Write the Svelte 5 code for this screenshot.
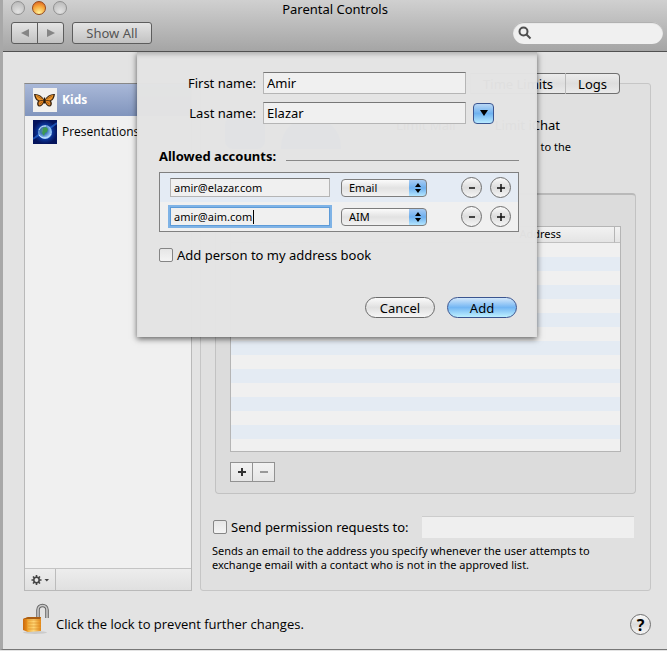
<script>
	let firstName = 'Amir';
	let lastName = 'Elazar';
	let addToBook = false;
	let sendRequests = false;
	let search = '';
	let requestAddress = '';

	let accounts = [
		{ address: 'amir@elazar.com', type: 'Email' },
		{ address: 'amir@aim.com', type: 'AIM' }
	];
	let active = 1;

	const addAccount = () => {
		accounts = [...accounts, { address: '', type: 'Email' }];
	};
	const removeAccount = (i) => {
		accounts = accounts.filter((_, n) => n !== i);
	};
</script>

<div class="window">
	<header>
		<div class="titlebar">
			<div class="lights">
				<button class="light" aria-label="Close"></button>
				<button class="light amber" aria-label="Minimize"></button>
				<button class="light" aria-label="Zoom"></button>
			</div>
			<h1>Parental Controls</h1>
		</div>
		<div class="toolbar">
			<div class="nav">
				<button aria-label="Back"><svg width="10" height="10" viewBox="0 0 10 10"><path d="M9 1v8L1 5z" /></svg></button>
				<button aria-label="Forward"><svg width="10" height="10" viewBox="0 0 10 10"><path d="M1 1v8l8-4z" /></svg></button>
			</div>
			<button class="show-all">Show All</button>
			<label class="search">
				<svg width="14" height="14" viewBox="0 0 14 14"><circle cx="5.5" cy="5.5" r="4" /><path d="M8.5 8.5l4 4" /></svg>
				<input type="text" aria-label="Search" bind:value={search}>
			</label>
		</div>
	</header>

	<main>
		<aside>
			<ul>
				<li class="selected">
					<svg width="24" height="24" viewBox="0 0 24 24">
						<rect width="24" height="24" fill="#f1f0ee" />
						<path d="M11.5 12C9 7.500 5 5.500 1 6c.4 3 1.400 6 4 7-1.500 2-1 5 1 5.500 2.500.2 4.500-2 5.500-5 1 3 3 5.200 5.500 5 2-.5 2.500-3.500 1-5.500 2.600-1 3.600-4 4-7-4-.5-8 1.500-10.500 6z" fill="#3b2613" />
						<path d="M10.500 11.800C8 8.500 5.500 7 2.500 6.900c.5 2.600 1.500 4.700 4 5.500z" fill="#ec9429" />
						<path d="M12.500 11.800c2.500-3.300 5-4.800 8-4.900-.5 2.600-1.500 4.700-4 5.500z" fill="#ec9429" />
						<path d="M10.500 12.600l-4.100.7c-1.400 1.400-1.100 3.900.2 4.300 1.900 0 3.400-2.300 3.900-5z" fill="#e08423" />
						<path d="M12.500 12.600l4.100.7c1.400 1.400 1.100 3.900-.2 4.300-1.900 0-3.400-2.300-3.900-5z" fill="#e08423" />
						<path d="M4 8l5 3M19 8l-5 3M7 16l2-2M16 16l-2-2" stroke="#74400f" stroke-width=".5" />
						<path d="M11.500 9.500v6" stroke="#241708" stroke-width="1.200" />
					</svg>
					<span>Kids</span>
				</li>
				<li>
					<svg width="24" height="24" viewBox="0 0 24 24">
						<defs>
							<radialGradient id="space"><stop offset="0" stop-color="#2860d8" /><stop offset=".55" stop-color="#0c3aa0" /><stop offset="1" stop-color="#05145c" /></radialGradient>
							<radialGradient id="globe" cx=".4" cy=".4"><stop offset="0" stop-color="#5b9a78" /><stop offset=".5" stop-color="#3d72b4" /><stop offset="1" stop-color="#8fc0f4" /></radialGradient>
						</defs>
						<rect width="24" height="24" fill="#05145c" />
						<rect width="24" height="24" fill="url(#space)" />
						<path d="M0 19L7 14M17 8l7-5" stroke="#2c76e6" stroke-width="2" opacity=".6" />
						<circle cx="12" cy="12" r="7" fill="url(#globe)" />
						<path d="M10 8l3-1 2 2-1 3-2 1-1 3-2-3 1-2z" fill="#3c9a50" />
						<path d="M6 15c3 4 9 4 12-1M6 10c1-3 4-4 7-4" stroke="#c7e2ff" fill="none" />
					</svg>
					<span>Presentations</span>
				</li>
			</ul>
			<div class="actions">
				<button aria-label="Actions">
					<svg width="18" height="12" viewBox="0 0 18 12">
						<circle cx="5.500" cy="6" r="2.700" fill="none" stroke="#444" stroke-width="1.600" />
						<path d="M5.500 1v2M5.500 9v2M.5 6h2M8.500 6h2M2 2.500l1.400 1.400M7.600 8.100L9 9.500M9 2.500L7.600 3.900M3.400 8.100L2 9.500" stroke="#444" stroke-width="1.600" />
						<path d="M13.500 5h4.500l-2.200 2.500z" fill="#444" />
					</svg>
				</button>
			</div>
		</aside>

		<section class="panel">
			<nav class="tabs">
				<button>Time Limits</button>
				<button>Logs</button>
			</nav>
			<div class="intro">
				<div class="app-icon"></div>
				<div class="app-icon wide"></div>
				<div class="limits">
					<p class="kinds"><span>Limit Mail</span><span>Limit iChat</span></p>
					<p class="note">to the</p>
				</div>
			</div>

			<div class="group">
				<table>
					<thead>
						<tr><th>Address</th><th class="corner"></th></tr>
					</thead>
					<tbody>
						<tr><td colspan="2"></td></tr>
					</tbody>
				</table>
				<div class="edit">
					<button aria-label="Add contact"><svg width="10" height="10" viewBox="0 0 10 10"><path d="M5 1v8M1 5h8" stroke="#333" stroke-width="2" /></svg></button>
					<button aria-label="Remove contact"><svg width="10" height="10" viewBox="0 0 10 10"><path d="M1 5h8" stroke="#999" stroke-width="2" /></svg></button>
				</div>
			</div>

			<div class="permission">
				<label class="check"><input type="checkbox" bind:checked={sendRequests}>Send permission requests to:</label>
				<input class="plain" type="text" aria-label="Email address" bind:value={requestAddress}>
			</div>
			<p class="help-text">Sends an email to the address you specify whenever the user attempts to exchange email with a contact who is not in the approved list.</p>
		</section>
	</main>

	<footer>
		<svg width="26" height="32" viewBox="0 0 26 32">
			<defs>
				<linearGradient id="brass"><stop offset="0" stop-color="#c9680c" /><stop offset=".22" stop-color="#e68c1b" /><stop offset=".28" stop-color="#f2b13f" /><stop offset=".6" stop-color="#ffd675" /><stop offset="1" stop-color="#e48a18" /></linearGradient>
			</defs>
			<ellipse cx="12" cy="29.500" rx="12" ry="1.500" fill="#bbb" opacity=".6" />
			<path d="M15 15V7c0-6 9-6 9 0v8" fill="none" stroke="#666" stroke-width="3.600" />
			<path d="M15 15V7c0-6 9-6 9 0v8" fill="none" stroke="#c9c9c9" stroke-width="1.600" />
			<path d="M0 16l5-2h13v14l-13 1-5-2z" fill="url(#brass)" />
			<path d="M5 17h13M5 20h13M5 23h13M5 26h13" stroke="#d07f1c" stroke-width=".5" />
			<path d="M0 16l5-2h13l-1 2H4z" fill="#a95d13" />
		</svg>
		<p>Click the lock to prevent further changes.</p>
		<button class="round help" aria-label="Help">?</button>
	</footer>

	<form class="sheet" on:submit|preventDefault>
		<div class="field">
			<label for="first">First name:</label>
			<input id="first" type="text" bind:value={firstName}>
		</div>
		<div class="field">
			<label for="last">Last name:</label>
			<input id="last" type="text" bind:value={lastName}>
			<button type="button" class="expand" aria-label="Show address book"><svg width="10" height="8" viewBox="0 0 10 8"><path d="M1 1h8L5 7z" /></svg></button>
		</div>

		<div class="legend"><h2>Allowed accounts:</h2><hr></div>

		<div class="accounts">
			{#each accounts as account, i}
				<div class="account">
					<div class="address" class:active={i === active}>
						<input type="text" aria-label="Account" bind:value={account.address} on:focus={() => (active = i)}>
						{#if i === active}<span class="caret"></span>{/if}
					</div>
					<div class="popup">
						<select aria-label="Account type" bind:value={account.type}>
							<option>Email</option>
							<option>AIM</option>
						</select>
						<svg width="6" height="10" viewBox="0 0 6 10"><path d="M0 4l3-4 3 4zM0 6l3 4 3-4z" /></svg>
					</div>
					<button type="button" class="round" aria-label="Remove account" on:click={() => removeAccount(i)}><svg width="10" height="10" viewBox="0 0 10 10"><path d="M2 5h6" /></svg></button>
					<button type="button" class="round" aria-label="Add account" on:click={addAccount}><svg width="10" height="10" viewBox="0 0 10 10"><path d="M5 1v8M1 5h8" /></svg></button>
				</div>
			{/each}
		</div>

		<label class="check"><input type="checkbox" bind:checked={addToBook}>Add person to my address book</label>

		<div class="buttons">
			<button type="button" class="pill">Cancel</button>
			<button type="submit" class="pill default">Add</button>
		</div>
	</form>
</div>

<style>
	:global(body) {
		margin: 0;
		background: #e3e3e3;
	}
	.window {
		position: relative;
		border-left: 3px solid #a8a8a8;
		border-bottom: 1px solid #777;
		background: #e3e3e3;
		font-family: "Lucida Grande", "Noto Sans", "Open Sans", sans-serif;
		font-size: 13px;
		line-height: 16px;
		color: #000;
	}
	.window * {
		box-sizing: border-box;
	}
	h1, h2, p, ul {
		margin: 0;
		padding: 0;
	}
	button, input, select {
		margin: 0;
		padding: 0;
		font: inherit;
		color: inherit;
		outline: none;
	}
	button {
		display: flex;
		align-items: center;
		justify-content: center;
	}

	header {
		height: 52px;
		background: linear-gradient(#d0d0d0, #a5a5a5);
		border-bottom: 1px solid #515151;
	}
	.titlebar {
		display: grid;
		grid-template-columns: 80px 1fr 80px;
		height: 22px;
		padding-top: 1px;
	}
	.lights {
		display: flex;
		gap: 7px;
		padding-left: 8px;
	}
	.light {
		width: 14px;
		height: 14px;
		border: 1px solid #919191;
		border-radius: 50%;
		background: radial-gradient(circle at 50% 80%, #e2e2e2, #b5b5b5);
	}
	.amber {
		border-color: #95491c;
		background: radial-gradient(circle at 50% 90%, #fff39a, #f5a53b 55%, #d8561b);
	}
	h1 {
		font-size: 13px;
		font-weight: 400;
		text-align: center;
	}
	.toolbar {
		display: flex;
		padding: 0 4px 0 8px;
	}
	.nav {
		display: flex;
	}
	.nav button, .show-all {
		height: 22px;
		border: 1px solid #5d5d5d;
		background: linear-gradient(#e4e4e4, #c2c2c2);
		color: #555;
	}
	.nav button {
		width: 27px;
		border-radius: 3px 0 0 3px;
	}
	.nav button + button {
		margin-left: -1px;
		border-radius: 0 3px 3px 0;
	}
	.nav svg {
		fill: #858585;
	}
	.show-all {
		width: 80px;
		margin-left: 8px;
		border-radius: 3px;
	}
	.search {
		display: flex;
		align-items: center;
		width: 150px;
		height: 22px;
		margin-left: auto;
		padding: 0 6px 0 5px;
		border-radius: 11px;
		background: #f0f0f0;
		box-shadow: inset 0 1px 1px #aaa;
	}
	.search svg {
		flex: none;
		fill: none;
		stroke: #4f4f4f;
		stroke-width: 2;
	}
	.search input {
		min-width: 0;
		border: 0;
		background: none;
	}

	main {
		display: flex;
		gap: 8px;
		padding: 31px 16px 0 21px;
	}
	aside {
		display: flex;
		flex: none;
		flex-direction: column;
		width: 168px;
		border: 1px solid #b9b9b9;
		border-top-color: #888;
		background: #f0f0f0;
	}
	ul {
		flex: 1;
		list-style: none;
	}
	li {
		display: flex;
		align-items: center;
		gap: 5px;
		height: 32px;
		padding-left: 8px;
		font-family: "Lucida Grande", "Open Sans", sans-serif;
		font-size: 12px;
	}
	.selected {
		background: linear-gradient(#a9b8d8, #8195bd);
		color: #fff;
		font-weight: 700;
	}
	.actions {
		height: 22px;
		border-top: 1px solid #c4c4c4;
		background: linear-gradient(#ededed, #e0e0e0);
	}
	.actions button {
		width: 31px;
		height: 21px;
		border: 0;
		border-right: 1px solid #bbb;
		background: none;
	}

	.panel {
		flex: 1;
		min-width: 0;
		padding-bottom: 18px;
		border: 1px solid #c6c6c6;
		border-radius: 3px;
		background: #e0e0e0;
	}
	.tabs {
		display: flex;
		justify-content: flex-end;
		margin: -11px 30px 0;
	}
	.tabs button {
		height: 21px;
		padding: 0 12px;
		border: 1px solid #707070;
		border-left-color: #bbb;
		border-right-width: 0;
		background: linear-gradient(#ececec, #dedede 50%, #eaeaea);
	}
	.tabs button:last-child {
		border-right-width: 1px;
		border-radius: 0 4px 4px 0;
	}
	.intro {
		display: flex;
		gap: 16px;
		height: 76px;
		margin: 23px 79px 0 24px;
	}
	.app-icon {
		width: 40px;
		height: 32px;
		border-radius: 8px;
		background: #6fa0e8;
	}
	.wide {
		width: 60px;
		border-radius: 30px 30px 0 0;
	}
	.limits {
		flex: 1;
		text-align: right;
	}
	.kinds span {
		margin: 0 11px 0 28px;
	}
	.note {
		margin-top: 7px;
		font-size: 11px;
		line-height: 14px;
	}
	.group {
		margin: 0 14px;
		padding: 31px 14px 11px;
		border: 1px solid #c2c2c2;
		border-top: 2px solid #b9b9b9;
		border-radius: 4px;
		background: #dcdcdc;
	}
	table {
		width: 100%;
		border: 1px solid #b5b5b5;
		border-collapse: separate;
		border-spacing: 0;
	}
	th {
		height: 16px;
		padding: 0 53px 1px 0;
		border-bottom: 1px solid #c0c0c0;
		background: linear-gradient(#f2f2f2, #e4e4e4);
		font-size: 11px;
		line-height: 14px;
		font-weight: 400;
		text-align: right;
	}
	.corner {
		width: 6px;
		padding: 0;
		border-left: 1px solid #b5b5b5;
	}
	td {
		height: 208px;
		padding: 0;
		background: repeating-linear-gradient(#f0f0f0 0 14px, #e4ebf3 14px 28px);
	}
	.edit {
		display: flex;
		margin-top: 10px;
	}
	.edit button {
		width: 23px;
		height: 20px;
		border: 1px solid #929292;
		background: linear-gradient(#f2f2f2, #e6e6e6);
	}
	.edit button + button {
		margin-left: -1px;
	}
	.permission {
		display: flex;
		gap: 13px;
		align-items: center;
		margin: 22px 16px 0 12px;
	}
	.plain {
		flex: 1;
		min-width: 0;
		height: 22px;
		border: 0;
		border-top: 1px solid #ccc;
		background: #efefef;
	}
	.help-text {
		margin: 6px 30px 0 11px;
		font-size: 11px;
		line-height: 14px;
	}
	.check {
		display: flex;
		gap: 4px;
		align-items: center;
	}
	.check input {
		appearance: none;
		width: 14px;
		height: 14px;
		border: 1px solid #858585;
		border-radius: 2px;
		background: linear-gradient(#e6e6e6, #f4f4f4);
	}

	footer {
		display: flex;
		gap: 7px;
		align-items: center;
		padding: 12px 16px 14px 20px;
	}
	footer p {
		flex: 1;
		padding-top: 10px;
		font-family: "Lucida Grande", "Open Sans", sans-serif;
	}
	.round {
		width: 21px;
		height: 21px;
		border: 1px solid #6f6f6f;
		border-radius: 50%;
		background: linear-gradient(#fafafa, #dcdcdc 50%, #f6f6f6);
	}
	.round path {
		stroke: #111;
		stroke-width: 1.5;
	}
	.help {
		margin-top: 11px;
		font-size: 16px;
		font-weight: 700;
	}

	.sheet {
		position: absolute;
		top: 52px;
		left: 134px;
		width: 400px;
		padding: 20px 18px 19px 22px;
		background: rgba(227, 227, 227, 0.98);
		box-shadow: 0 2px 6px rgba(0, 0, 0, 0.6), inset 0 5px 5px -3px rgba(0, 0, 0, 0.25);
		clip-path: inset(0 -12px -12px -12px);
	}
	.field {
		display: grid;
		grid-template-columns: 97px 203px 21px;
		gap: 7px;
		align-items: center;
		height: 22px;
		margin-bottom: 8px;
	}
	.field label {
		text-align: right;
	}
	.field input {
		height: 22px;
		padding: 0 3px;
		border: 1px solid #b5b5b5;
		border-top: 1px solid #777;
		background: #f0f0f0;
	}
	.expand {
		height: 21px;
		border: 1px solid #3b5590;
		border-radius: 4px;
		background: linear-gradient(#b9d7f5, #6fb2f0 50%, #b8eaff);
	}
	.legend {
		display: flex;
		gap: 10px;
		align-items: center;
		margin-top: 24px;
	}
	h2 {
		font-size: 13px;
	}
	hr {
		flex: 1;
		height: 1px;
		margin: 8px 0 0;
		border: 0;
		background: #888;
	}
	.accounts {
		margin-top: 8px;
		border: 1px solid #808080;
		background: #f0f0f0;
	}
	.account {
		display: flex;
		gap: 8px;
		align-items: center;
		height: 29px;
		padding: 0 7px 0 10px;
		font-size: 11px;
	}
	.account:nth-child(odd) {
		background: #e4ebf4;
	}
	.address {
		position: relative;
		flex: 1;
	}
	.address input {
		width: 100%;
		height: 19px;
		padding: 0 3px;
		border: 1px solid #b5b5b5;
		border-top: 1px solid #777;
		background: #f0f0f0;
	}
	.active input {
		border-color: #5d9bd8;
		box-shadow: 0 0 0 2px #7fb3e6;
	}
	.caret {
		position: absolute;
		top: 3px;
		left: 83px;
		width: 1px;
		height: 14px;
		background: #000;
	}
	.popup {
		position: relative;
		margin: 0 26px 0 3px;
	}
	select {
		appearance: none;
		display: block;
		width: 86px;
		height: 18px;
		padding: 0 20px 0 7px;
		border: 1px solid #7d7d7d;
		border-radius: 4px;
		background:
			linear-gradient(#a8cbf2, #6dafee 50%, #b4e6ff) right / 17px 100% no-repeat,
			linear-gradient(#fbfbfb, #e2e2e2 50%, #f2f2f2);
	}
	.popup svg {
		position: absolute;
		top: 4px;
		right: 6px;
		pointer-events: none;
	}
	.sheet > .check {
		margin-top: 15px;
	}
	.buttons {
		display: flex;
		justify-content: flex-end;
		gap: 12px;
		margin: 34px 2px 0 0;
	}
	.pill {
		width: 70px;
		height: 21px;
		border: 1px solid #6b6b6b;
		border-radius: 11px;
		background: linear-gradient(#fafafa, #e0e0e0 50%, #f6f6f6);
	}
	.default {
		border-color: #3b5590;
		background: linear-gradient(#d3e7fa, #73b6f3 50%, #bdf0ff);
	}
</style>
